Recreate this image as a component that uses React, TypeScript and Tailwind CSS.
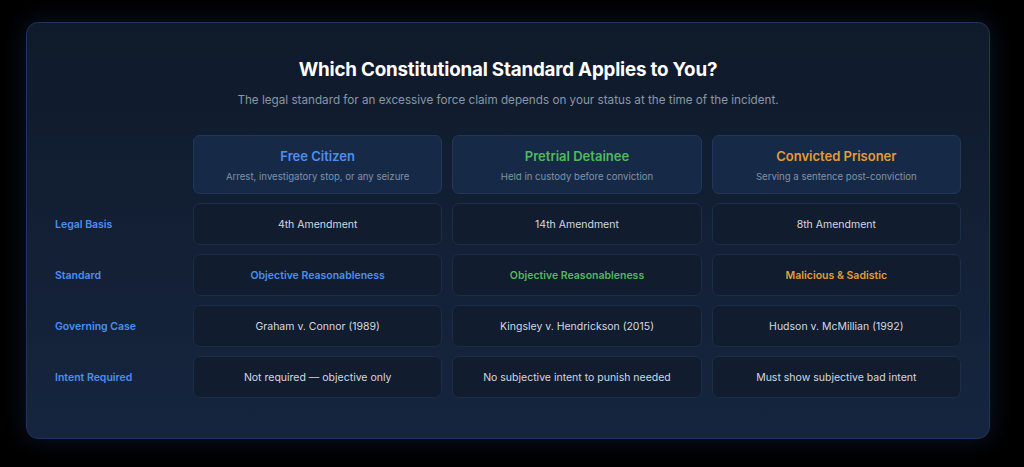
import React from "react";

const cols = [
  { title: "Free Citizen", sub: "Arrest, investigatory stop, or any seizure", color: "text-[#4b8ff0]" },
  { title: "Pretrial Detainee", sub: "Held in custody before conviction", color: "text-[#4fba5c]" },
  { title: "Convicted Prisoner", sub: "Serving a sentence post-conviction", color: "text-[#e59c34]" },
];

const rows: { label: string; cells: string[]; emph?: boolean }[] = [
  { label: "Legal Basis", cells: ["4th Amendment", "14th Amendment", "8th Amendment"] },
  { label: "Standard", cells: ["Objective Reasonableness", "Objective Reasonableness", "Malicious & Sadistic"], emph: true },
  { label: "Governing Case", cells: ["Graham v. Connor (1989)", "Kingsley v. Hendrickson (2015)", "Hudson v. McMillian (1992)"] },
  { label: "Intent Required", cells: ["Not required — objective only", "No subjective intent to punish needed", "Must show subjective bad intent"] },
];

export default function App() {
  return (
    <div
      className="w-[1024px] h-[467px] bg-black pt-[22px] pl-[26px]"
      style={{ fontFamily: "Inter, 'Noto Sans', sans-serif" }}
    >
      <div className="w-[964px] h-[417px] rounded-[12px] border border-[#1d3660] bg-gradient-to-b from-[#0f1a2a] to-[#16253f] shadow-[0_0_24px_rgba(40,90,170,0.25)] px-[28px] pt-[33px]">
        <h1 className="text-center text-white text-[18.8px] font-bold leading-[28px] tracking-[-0.2px]">
          Which Constitutional Standard Applies to You?
        </h1>
        <p className="text-center text-[#8a96a8] text-[11.7px] leading-[20px] mt-[6px]">
          The legal standard for an excessive force claim depends on your status at the time of the incident.
        </p>
        <div className="grid grid-cols-[128px_1fr_1fr_1fr] gap-x-[10px] gap-y-[9px] mt-[25px]">
          <div />
          {cols.map((c) => (
            <div
              key={c.title}
              className="h-[59px] rounded-[7px] border border-[#22385a] bg-[#162a48] flex flex-col items-center justify-center pt-[2px]"
            >
              <div className={`text-[13px] font-semibold leading-[18px] ${c.color}`}>{c.title}</div>
              <div className="text-[9.6px] text-[#8391a5] leading-[14px] mt-[5px]">{c.sub}</div>
            </div>
          ))}
          {rows.map((r) => (
            <React.Fragment key={r.label}>
              <div className="h-[42px] flex items-center pt-[2px] text-[10.5px] font-semibold text-[#4b8ff0]">
                {r.label}
              </div>
              {r.cells.map((t, i) => (
                <div
                  key={i}
                  className={`h-[42px] rounded-[7px] border border-[#1c2d48] bg-[#111c2e] flex items-center justify-center pt-[2px] text-[10.5px] ${
                    r.emph ? `font-semibold ${cols[i].color}` : "text-[#d3d8e0]"
                  }`}
                >
                  {t}
                </div>
              ))}
            </React.Fragment>
          ))}
        </div>
      </div>
    </div>
  );
}
